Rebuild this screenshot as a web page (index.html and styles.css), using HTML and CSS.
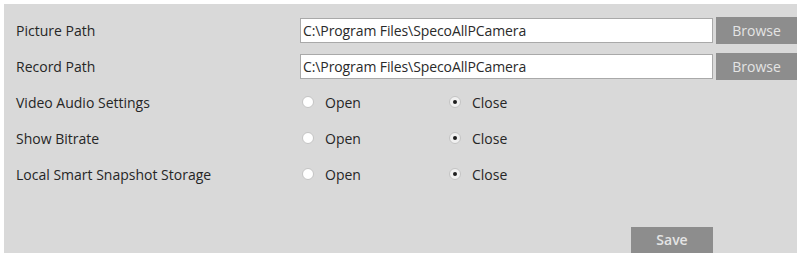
FILE: index.html
```html
<!DOCTYPE html>
<html lang="en">

<head>
    <meta charset="UTF-8">
    <title>Local Config</title>
    <link rel="stylesheet" href="styles.css">
</head>

<body>
    <div class="panel">
        <div class="row">
            <div class="label">Picture Path</div>
            <div class="path-box">C:\Program Files\SpecoAllPCamera</div>
            <div class="btn browse">Browse</div>
        </div>
        <div class="row">
            <div class="label">Record Path</div>
            <div class="path-box">C:\Program Files\SpecoAllPCamera</div>
            <div class="btn browse">Browse</div>
        </div>
        <div class="row">
            <div class="label">Video Audio Settings</div>
            <div class="option"><span class="radio"></span>Open</div>
            <div class="option"><span class="radio checked"></span>Close</div>
        </div>
        <div class="row">
            <div class="label">Show Bitrate</div>
            <div class="option"><span class="radio"></span>Open</div>
            <div class="option"><span class="radio checked"></span>Close</div>
        </div>
        <div class="row">
            <div class="label">Local Smart Snapshot Storage</div>
            <div class="option"><span class="radio"></span>Open</div>
            <div class="option"><span class="radio checked"></span>Close</div>
        </div>
        <div class="save-bar">
            <div class="btn save">Save</div>
        </div>
    </div>
</body>

</html>
```

FILE: styles.css
```css
body {
    margin: 0;
    padding: 4px 4px 0 4px;
    background-color: #fff;
    font-family: 'Open Sans', 'Noto Sans', sans-serif;
    font-size: 14px;
    color: #262626;
}

.panel {
    width: 793px;
    height: 249px;
    box-sizing: border-box;
    background-color: #d9d9d9;
    padding-top: 8px;
    display: flex;
    flex-direction: column;
}

.row {
    height: 36px;
    display: flex;
    align-items: center;
}

.label {
    width: 296px;
    padding-left: 12px;
    box-sizing: border-box;
}

.path-box {
    width: 413px;
    height: 25px;
    box-sizing: border-box;
    background-color: #fff;
    border: 1px solid #a9a9a9;
    padding-left: 2px;
    line-height: 23px;
    color: #2a2a2a;
    letter-spacing: -0.1px;
}

.btn {
    background-color: #8d8d8d;
    color: #e4e4e4;
    text-align: center;
    box-sizing: border-box;
}

.browse {
    width: 81px;
    height: 27px;
    line-height: 27px;
    margin-left: 3px;
}

.option {
    width: 147px;
    display: flex;
    align-items: center;
}

.radio {
    width: 12px;
    height: 12px;
    border-radius: 50%;
    background-color: #fff;
    border: 1px solid #c4c4c4;
    box-sizing: border-box;
    margin-left: 2px;
    margin-right: 11px;
    position: relative;
}

.radio.checked {
    background-color: #f0f0f0;
}

.radio.checked::after {
    content: '';
    position: absolute;
    left: 3px;
    top: 3px;
    width: 4px;
    height: 4px;
    border-radius: 50%;
    background-color: #1e1e1e;
}

.save-bar {
    margin-top: 35px;
    padding-left: 627px;
}

.save {
    width: 82px;
    height: 26px;
    line-height: 26px;
    font-weight: 600;
}
```
